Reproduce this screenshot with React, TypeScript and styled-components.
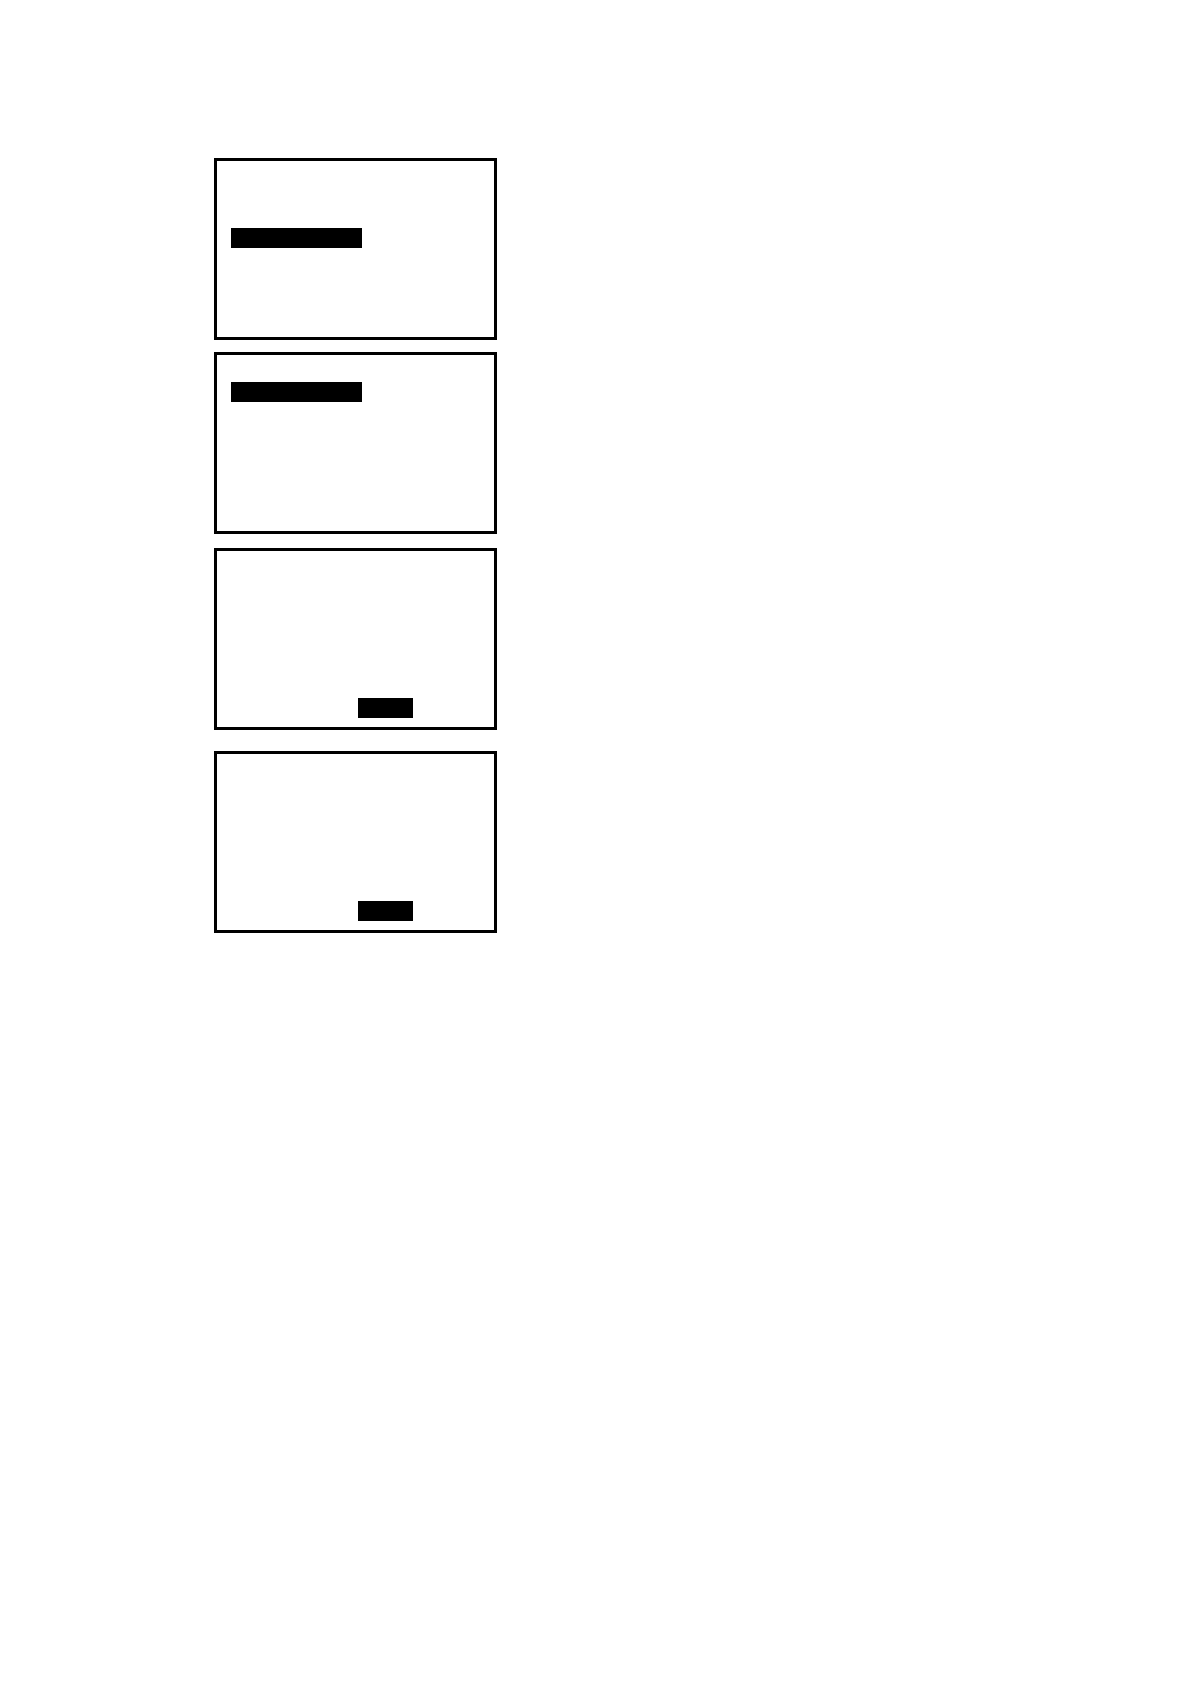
import React from 'react';
import styled, { createGlobalStyle } from 'styled-components';

const GlobalStyle = createGlobalStyle`
  * {
    box-sizing: border-box;
  }

  body {
    margin: 0;
    background: #fff;
    font-family: 'Liberation Sans', sans-serif;
  }
`;

const Page = styled.main`
  display: flex;
  flex-direction: column;
  min-height: 100vh;
  padding: 158px 24px 24px 214px;
`;

const Screen = styled.section<{ $gap: number }>`
  display: grid;
  grid-template-rows: repeat(8, 20px);
  width: 100%;
  max-width: 283px;
  margin-bottom: ${({ $gap }) => $gap}px;
  padding: 7px 14px 9px;
  border: 3px solid #000;
`;

const Highlight = styled.div<{ $row: number; $kind: Kind }>`
  grid-row: ${({ $row }) => $row};
  width: ${({ $kind }) => ($kind === 'item' ? 131 : 55)}px;
  margin-left: ${({ $kind }) => ($kind === 'item' ? 0 : 127)}px;
  background: #000;
`;

type Kind = 'item' | 'action';

interface ScreenData {
  name: string;
  row: number;
  kind: Kind;
  gap: number;
}

// Each screen holds eight text lines; `row` is the selected one.
const screens: ScreenData[] = [
  { name: 'first', row: 4, kind: 'item', gap: 12 },
  { name: 'second', row: 2, kind: 'item', gap: 14 },
  { name: 'third', row: 8, kind: 'action', gap: 21 },
  { name: 'fourth', row: 8, kind: 'action', gap: 0 },
];

export default function App() {
  return (
    <>
      <GlobalStyle />
      <Page>
        {screens.map(({ name, row, kind, gap }) => (
          <Screen key={name} $gap={gap}>
            <Highlight $row={row} $kind={kind} />
          </Screen>
        ))}
      </Page>
    </>
  );
}
